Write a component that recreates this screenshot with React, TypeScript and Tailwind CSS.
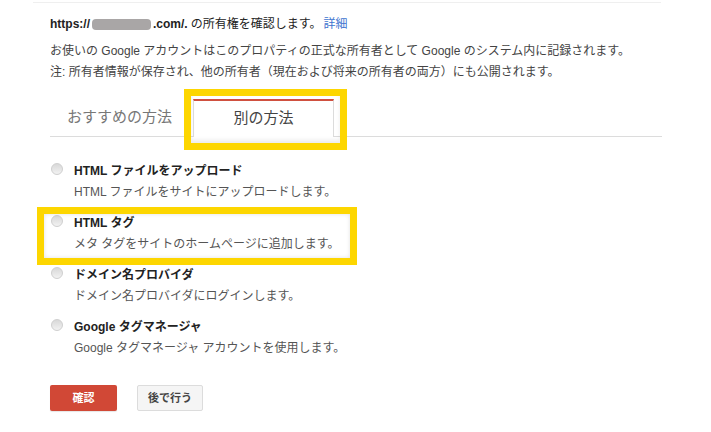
const options = [
  { title: "HTML ファイルをアップロード", desc: "HTML ファイルをサイトにアップロードします。" },
  { title: "HTML タグ", desc: "メタ タグをサイトのホームページに追加します。", highlight: true },
  { title: "ドメイン名プロバイダ", desc: "ドメイン名プロバイダにログインします。" },
  { title: "Google タグマネージャ", desc: "Google タグマネージャ アカウントを使用します。" },
];

function Radio() {
  return (
    <span className="mt-[2px] ml-[1px] h-[12px] w-[12px] shrink-0 rounded-full border border-[#cfcfcf] bg-gradient-to-b from-[#d8d8d8] to-[#f2f2f2]" />
  );
}

export default function App() {
  return (
    <div
      className="relative h-[432px] w-[711px] overflow-hidden bg-white text-[12px] text-[#333]"
      style={{ fontFamily: '"Liberation Sans", Arial, "Noto Sans CJK JP", sans-serif' }}
    >
      {/* faint top rule */}
      <div className="ml-[33px] h-[3px] w-[628px] border-b border-[#efefef]" />

      <div className="pl-[50px]">
        {/* ownership line */}
        <div className="mt-[12px] flex h-[18px] items-center leading-[18px] text-[#222]">
          <span className="font-bold">https://</span>
          <span className="mx-[2px] h-[11px] w-[59px] rounded-[4px] bg-[#a9a6a6]" />
          <span className="font-bold">.com/.</span>
          <span className="ml-[3px]">の所有権を確認します。</span>
          <a className="ml-[2px] text-[#3e74cf]">詳細</a>
        </div>

        <div className="mt-[8px] leading-[21px] text-[#444]">
          <p>お使いの Google アカウントはこのプロパティの正式な所有者として Google のシステム内に記録されます。</p>
          <p>注: 所有者情報が保存され、他の所有者（現在および将来の所有者の両方）にも公開されます。</p>
        </div>

        {/* tabs */}
        <div className="mt-[17px] flex h-[37px] w-[612px] items-end border-b border-[#dcdcdc]">
          <div className="flex h-[37px] items-center pl-[17px] pr-[21px] text-[15px] text-[#777]">
            おすすめの方法
          </div>
          <div className="relative -mb-px flex h-[38px] w-[141px] items-center justify-center border-x border-t-2 border-[#dcdcdc] border-t-[#d0503f] bg-white pb-[1px] text-[15px] text-[#444]">
            別の方法
            <div className="pointer-events-none absolute left-[-10px] top-[-12px] h-[61px] w-[163px] border-[7px] border-[#fdd600] shadow-[inset_0_-3px_4px_rgba(0,0,0,0.08)]" />
          </div>
        </div>

        {/* methods */}
        <div className="mt-[24px] flex flex-col gap-[10px]">
          {options.map((o) => (
            <div key={o.title} className="relative flex gap-[11px]">
              <Radio />
              <div>
                <div className="h-[20px] font-bold leading-[20px] text-[#222]">{o.title}</div>
                <div className="leading-[22px] text-[#555]">{o.desc}</div>
              </div>
              {o.highlight && (
                <div className="pointer-events-none absolute left-[-13px] top-[-6px] h-[58px] w-[320px] border-[7px] border-[#fdd600] shadow-[inset_0_0_4px_rgba(0,0,0,0.12)]" />
              )}
            </div>
          ))}
        </div>

        {/* actions */}
        <div className="mt-[26px] flex gap-[20px]">
          <button className="h-[26px] w-[67px] rounded-[2px] bg-[#d14836] text-[11px] font-bold text-white shadow-[0_1px_1px_rgba(0,0,0,0.1)]">
            確認
          </button>
          <button className="h-[26px] w-[66px] rounded-[2px] border border-[#dcdcdc] bg-[#f5f5f5] text-[11px] font-bold text-[#444]">
            後で行う
          </button>
        </div>
      </div>
    </div>
  );
}
